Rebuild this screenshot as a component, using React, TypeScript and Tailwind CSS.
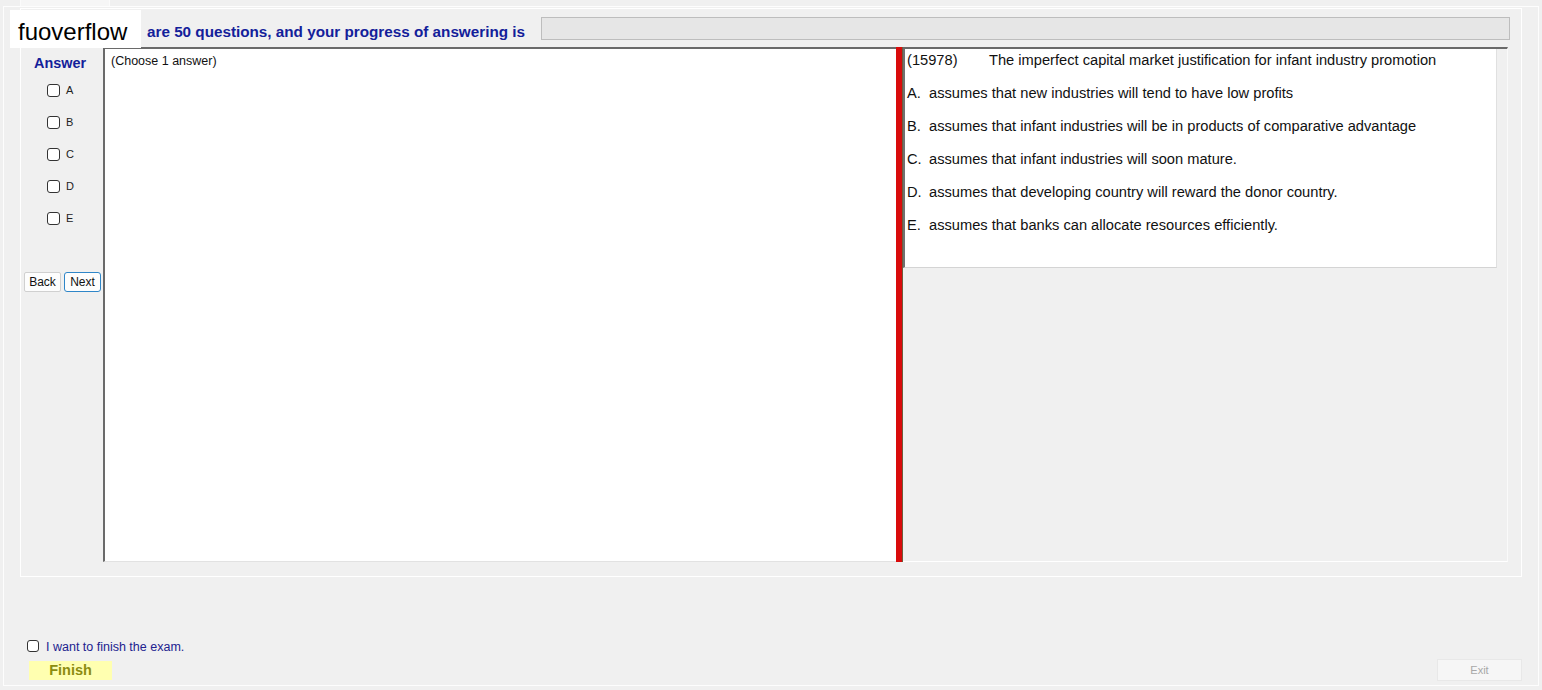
import React from "react";

const options = [
  { key: "A", text: "assumes that new industries will tend to have low profits" },
  { key: "B", text: "assumes that infant industries will be in products of comparative advantage" },
  { key: "C", text: "assumes that infant industries will soon mature." },
  { key: "D", text: "assumes that developing country will reward the donor country." },
  { key: "E", text: "assumes that banks can allocate resources efficiently." },
];

const Box = ({ size = 13 }: { size?: number }) => (
  <span
    className={`inline-block shrink-0 rounded-[3px] border border-[#333333] bg-white ${
      size === 13 ? "h-[13px] w-[13px]" : "h-[12px] w-[12px]"
    }`}
  />
);

export default function App() {
  return (
    <div
      className="relative h-[690px] w-[1542px] overflow-hidden bg-[#f0f0f0] text-black"
      style={{ fontFamily: '"Liberation Sans", Arial, sans-serif' }}
    >
      {/* tab strip */}
      <div className="flex h-[6px]">
        <div className="ml-[20px] h-full w-[90px] border-x border-[#fbfbfb] bg-[#f6f6f6]" />
      </div>

      {/* tab page */}
      <div className="ml-[3px] flex h-[680px] w-[1536px] flex-col border border-[#fdfdfd]">
        {/* group box */}
        <div className="ml-[16px] mt-[1px] flex h-[569px] w-[1502px] flex-col border border-white">
          <div className="flex h-[38px] items-start pl-[126px]">
            <span className="mt-[14px] text-[15.25px] font-bold leading-[18px] text-[#13209a]">
              are 50 questions, and your progress of answering is
            </span>
            <div className="ml-[16px] mt-[8px] h-[23px] w-[969px] border border-[#bdbdbd] bg-[#e6e6e6]" />
          </div>

          <div className="flex h-[515px] pl-[3px]">
            {/* answer column */}
            <div className="flex w-[79px] flex-col">
              <div className="pl-[10px] pt-[8px] text-[14.4px] font-bold leading-[16px] text-[#13209a]">Answer</div>
              <div className="mt-[3px] flex flex-col">
                {options.map((o) => (
                  <div key={o.key} className="flex h-[32px] items-center gap-[6px] pl-[23px]">
                    <Box />
                    <span className="text-[11px] leading-none text-[#222]">{o.key}</span>
                  </div>
                ))}
              </div>
              <div className="mt-[38px] flex gap-[3px]">
                <button
                  type="button"
                  className="h-[20px] w-[37px] rounded-[2px] border border-[#d0d0d0] bg-[#fdfdfd] text-[12px] leading-none text-[#111]"
                >
                  Back
                </button>
                <button
                  type="button"
                  className="h-[20px] w-[37px] rounded-[3px] border border-[#2f86c8] bg-[#fdfdfd] text-[12px] leading-none text-[#111]"
                >
                  Next
                </button>
              </div>
            </div>

            {/* answer text area */}
            <div className="w-[793px] border-b border-l-2 border-t-2 border-b-[#e2e2e2] border-l-[#6a6a6a] border-t-[#6a6a6a] bg-white pl-[6px] pt-[5px] text-[12.5px] leading-[14px] text-[#111]">
              (Choose 1 answer)
            </div>

            {/* splitter */}
            <div className="w-[7px] border-r border-[#6e5c3c] bg-[#d90b0b]" />

            {/* question panel */}
            <div className="flex w-[605px] flex-col border-b border-r border-t-2 border-b-white border-r-[#fafafa] border-t-[#6a6a6a]">
              <div className="flex h-[219px] w-[594px] flex-col gap-[17px] border-b border-l-2 border-r border-b-[#d4d4d4] border-l-[#707070] border-r-[#e0e0e0] bg-white pl-[2px] pt-[3px] text-[14.67px] leading-[16px] text-[#111]">
                <div className="flex">
                  <span className="w-[82px]">(15978)</span>
                  <span>The imperfect capital market justification for infant industry promotion</span>
                </div>
                {options.map((o) => (
                  <div key={o.key} className="flex">
                    <span className="w-[22px]">{o.key}.</span>
                    <span>{o.text}</span>
                  </div>
                ))}
              </div>
            </div>
          </div>
        </div>

        {/* footer */}
        <div className="flex h-[108px] items-end justify-between pb-[5px] pl-[23px] pr-[16px]">
          <div className="flex flex-col gap-[7px]">
            <label className="flex h-[16px] items-center gap-[7px]">
              <Box size={12} />
              <span className="mt-[3px] text-[12.5px] leading-none text-[#22228f]">I want to finish the exam.</span>
            </label>
            <button
              type="button"
              className="ml-[2px] h-[19px] w-[83px] bg-[#ffffb0] text-[14.5px] font-bold leading-none text-[#8c8c10]"
            >
              Finish
            </button>
          </div>
          <button
            type="button"
            className="mb-[-1px] h-[22px] w-[85px] border border-[#e8e8e8] bg-[#f6f6f6] text-[11px] leading-none text-[#a8a8a8]"
          >
            Exit
          </button>
        </div>
      </div>

      {/* watermark */}
      <div className="absolute left-[10px] top-[10px] flex h-[38px] w-[131px] items-center bg-white pl-[8px] pt-[5px] text-[24px] leading-none text-black">
        fuoverflow
      </div>
    </div>
  );
}
